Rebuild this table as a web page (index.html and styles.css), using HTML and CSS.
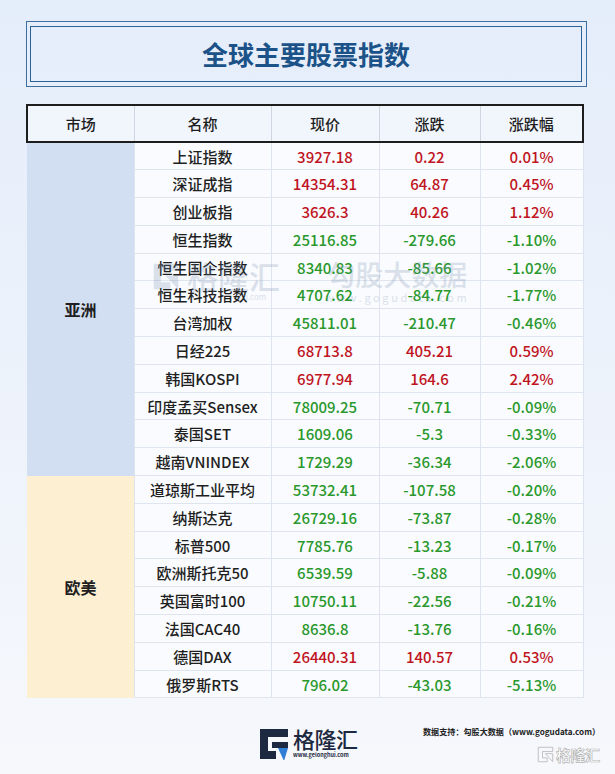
FILE: index.html
```html
<!DOCTYPE html>
<html lang="zh-CN">
<head>
<meta charset="utf-8">
<title>全球主要股票指数</title>
<link rel="stylesheet" href="styles.css">
</head>
<body>
<div class="page">
  <header class="title-box">
    <div class="title-inner"><h1>全球主要股票指数</h1></div>
  </header>

  <div class="table-wrap">
    <table class="idx">
      <thead>
        <tr><th class="c-mkt">市场</th><th class="c-name">名称</th><th class="c-price">现价</th><th class="c-chg">涨跌</th><th class="c-pct">涨跌幅</th></tr>
      </thead>
      <tbody>
        <tr><td class="mkt asia" rowspan="12">亚洲</td><td class="name">上证指数</td><td class="up">3927.18</td><td class="up">0.22</td><td class="up">0.01%</td></tr>
        <tr><td class="name">深证成指</td><td class="up">14354.31</td><td class="up">64.87</td><td class="up">0.45%</td></tr>
        <tr><td class="name">创业板指</td><td class="up">3626.3</td><td class="up">40.26</td><td class="up">1.12%</td></tr>
        <tr><td class="name">恒生指数</td><td class="dn">25116.85</td><td class="dn">-279.66</td><td class="dn">-1.10%</td></tr>
        <tr><td class="name">恒生国企指数</td><td class="dn">8340.83</td><td class="dn">-85.66</td><td class="dn">-1.02%</td></tr>
        <tr><td class="name">恒生科技指数</td><td class="dn">4707.62</td><td class="dn">-84.77</td><td class="dn">-1.77%</td></tr>
        <tr><td class="name">台湾加权</td><td class="dn">45811.01</td><td class="dn">-210.47</td><td class="dn">-0.46%</td></tr>
        <tr><td class="name">日经225</td><td class="up">68713.8</td><td class="up">405.21</td><td class="up">0.59%</td></tr>
        <tr><td class="name">韩国KOSPI</td><td class="up">6977.94</td><td class="up">164.6</td><td class="up">2.42%</td></tr>
        <tr><td class="name">印度孟买Sensex</td><td class="dn">78009.25</td><td class="dn">-70.71</td><td class="dn">-0.09%</td></tr>
        <tr><td class="name">泰国SET</td><td class="dn">1609.06</td><td class="dn">-5.3</td><td class="dn">-0.33%</td></tr>
        <tr><td class="name">越南VNINDEX</td><td class="dn">1729.29</td><td class="dn">-36.34</td><td class="dn">-2.06%</td></tr>
        <tr><td class="mkt euro" rowspan="8">欧美</td><td class="name">道琼斯工业平均</td><td class="dn">53732.41</td><td class="dn">-107.58</td><td class="dn">-0.20%</td></tr>
        <tr><td class="name">纳斯达克</td><td class="dn">26729.16</td><td class="dn">-73.87</td><td class="dn">-0.28%</td></tr>
        <tr><td class="name">标普500</td><td class="dn">7785.76</td><td class="dn">-13.23</td><td class="dn">-0.17%</td></tr>
        <tr><td class="name">欧洲斯托克50</td><td class="dn">6539.59</td><td class="dn">-5.88</td><td class="dn">-0.09%</td></tr>
        <tr><td class="name">英国富时100</td><td class="dn">10750.11</td><td class="dn">-22.56</td><td class="dn">-0.21%</td></tr>
        <tr><td class="name">法国CAC40</td><td class="dn">8636.8</td><td class="dn">-13.76</td><td class="dn">-0.16%</td></tr>
        <tr><td class="name">德国DAX</td><td class="up">26440.31</td><td class="up">140.57</td><td class="up">0.53%</td></tr>
        <tr><td class="name">俄罗斯RTS</td><td class="dn">796.02</td><td class="dn">-43.03</td><td class="dn">-5.13%</td></tr>
      </tbody>
    </table>

    <div class="wm wm-glh">
      <svg class="wm-g" viewBox="0 0 32 32" aria-hidden="true">
        <path d="M2 2 H30 V10 H10 V23 H21 V31 H2 Z" fill="#6f86a8"/>
        <path d="M15 15 H30 V31 Z" fill="#6f86a8"/>
      </svg>
      <span class="wm-glh-text">格隆汇</span>
      <span class="wm-glh-url">hui.com</span>
    </div>
    <div class="wm wm-gogu">
      <span class="wm-gogu-text">勾股大数据</span>
      <span class="wm-gogu-url">www.gogudata.com</span>
    </div>
  </div>

  <footer class="foot">
    <div class="logo">
      <svg class="logo-g" viewBox="0 0 32 32" aria-hidden="true">
        <path d="M3 1 H31 V9 H11 V23 H19 V31 H3 Z" fill="#1d2940"/>
        <path d="M15 14 H31 V20 H15 Z" fill="#1d2940"/>
        <path d="M21 20 H31 L27 33 Z" fill="#2f7fd6"/>
      </svg>
      <div class="logo-words">
        <span class="logo-name">格隆汇</span>
        <span class="logo-url">www.gelonghui.com</span>
      </div>
    </div>
    <p class="source">数据支持：勾股大数据（www.gogudata.com）</p>
    <div class="corner-mark">
      <svg class="corner-g" viewBox="0 0 20 20" aria-hidden="true">
        <path d="M1.5 1.5 H18.5 V6.5 H6.5 V14 H12 V18.5 H1.5 Z" fill="none" stroke="#b9b9b9" stroke-width="1"/>
        <path d="M10 9 H18.5 V18.5 Z" fill="none" stroke="#b9b9b9" stroke-width="1"/>
      </svg>
      <span class="corner-text">格隆汇</span>
    </div>
  </footer>
</div>
</body>
</html>
```

FILE: styles.css
```css
* { box-sizing: border-box; }

html, body {
  margin: 0;
  padding: 0;
}

body {
  width: 615px;
  height: 774px;
  background: linear-gradient(180deg, #e4edfa 0%, #eef3fb 55%, #f6f8fc 100%);
  font-family: "Noto Sans CJK SC", "Noto Sans", sans-serif;
  color: #222;
  overflow: hidden;
}

.page {
  padding: 21px 0 0 26px;
}

/* ---------- title ---------- */
.title-box {
  width: 561px;
  height: 66px;
  border: 1px solid #3d6e9e;
  padding: 4px 4px 4px 3px;
}

.title-inner {
  height: 100%;
  border: 1.5px solid #2b6194;
  display: flex;
  align-items: center;
  justify-content: center;
}

.title-inner h1 {
  margin: 0;
  font-size: 26px;
  font-weight: 700;
  color: #1b5288;
  line-height: 1;
}

/* ---------- table ---------- */
.table-wrap {
  position: relative;
  margin-top: 17px;
  width: 556px;
}

.idx {
  width: 556px;
  border-collapse: collapse;
  table-layout: fixed;
  font-size: 15px;
}

.c-mkt { width: 107px; }
.c-name { width: 137px; }
.c-price { width: 108px; }
.c-chg { width: 101px; }
.c-pct { width: 103px; }

.idx th {
  height: 37px;
  background: #f1f5fc;
  font-weight: 500;
  font-size: 15px;
  color: #1e1e1e;
  border-top: 2px solid #1d1d1d;
  border-bottom: 2px solid #1d1d1d;
  border-left: 1px solid #cfd6e2;
  border-right: 1px solid #cfd6e2;
  padding: 0;
}

.idx th:first-child { border-left: 2px solid #1d1d1d; }
.idx th:last-child { border-right: 2px solid #1d1d1d; }

.idx td {
  height: 27.8px;
  padding: 0;
  text-align: center;
  background: #f9fbfe;
  border: 1px solid #dfe5ef;
  line-height: 1;
  font-weight: 500;
}

.idx td.name { color: #1f1f1f; }
.idx td.up { color: #c0141e; }
.idx td.dn { color: #2a982c; }

.idx td.mkt {
  font-size: 16px;
  font-weight: 700;
  color: #1f1f1f;
  border-color: transparent;
  border-right: 1px solid #dfe5ef;
}

.idx td.asia { background: #d2def2; }
.idx td.euro { background: #fdefd2; }

/* ---------- watermark overlay ---------- */
.wm {
  position: absolute;
  pointer-events: none;
  opacity: 0.22;
  color: #6f86a8;
}

.wm-glh {
  left: 126px;
  top: 156px;
  display: flex;
  align-items: center;
}

.wm-g {
  width: 28px;
  height: 28px;
}

.wm-glh-text {
  margin-left: 7px;
  font-size: 31px;
  font-weight: 500;
  line-height: 1;
}

.wm-glh-url {
  position: absolute;
  left: 84px;
  top: 33px;
  font-size: 8px;
  line-height: 1;
}

.wm-gogu {
  left: 299px;
  top: 156px;
  display: flex;
  flex-direction: column;
  align-items: center;
}

.wm-gogu-text {
  font-size: 28px;
  font-weight: 500;
  line-height: 1;
}

.wm-gogu-url {
  margin-top: 4px;
  font-size: 11px;
  letter-spacing: 2.6px;
  line-height: 1;
}

/* ---------- footer ---------- */
.foot {
  position: relative;
  height: 76px;
}

.logo {
  position: absolute;
  left: 231px;
  top: 29px;
  display: flex;
  align-items: flex-start;
}

.logo-g {
  width: 32px;
  height: 32px;
  margin-top: 1px;
}

.logo-words {
  margin-left: 4px;
  display: flex;
  flex-direction: column;
}

.logo-name {
  font-size: 22px;
  font-weight: 500;
  color: #1d2940;
  line-height: 23px;
  letter-spacing: -0.5px;
}

.logo-url {
  font-size: 5.5px;
  font-weight: 700;
  color: #1d2940;
  line-height: 1;
  margin-top: 3px;
}

.source {
  position: absolute;
  left: 397px;
  top: 28px;
  margin: 0;
  font-size: 8.1px;
  font-weight: 700;
  color: #222;
  line-height: 12px;
  white-space: nowrap;
}

.corner-mark {
  position: absolute;
  left: 511px;
  top: 48px;
  display: flex;
  align-items: center;
}

.corner-g {
  width: 17px;
  height: 17px;
}

.corner-text {
  margin-left: 2px;
  font-size: 15px;
  font-weight: 700;
  line-height: 1;
  letter-spacing: -0.5px;
  color: #ffffff;
  -webkit-text-stroke: 0.7px #b5b5b5;
}
```
